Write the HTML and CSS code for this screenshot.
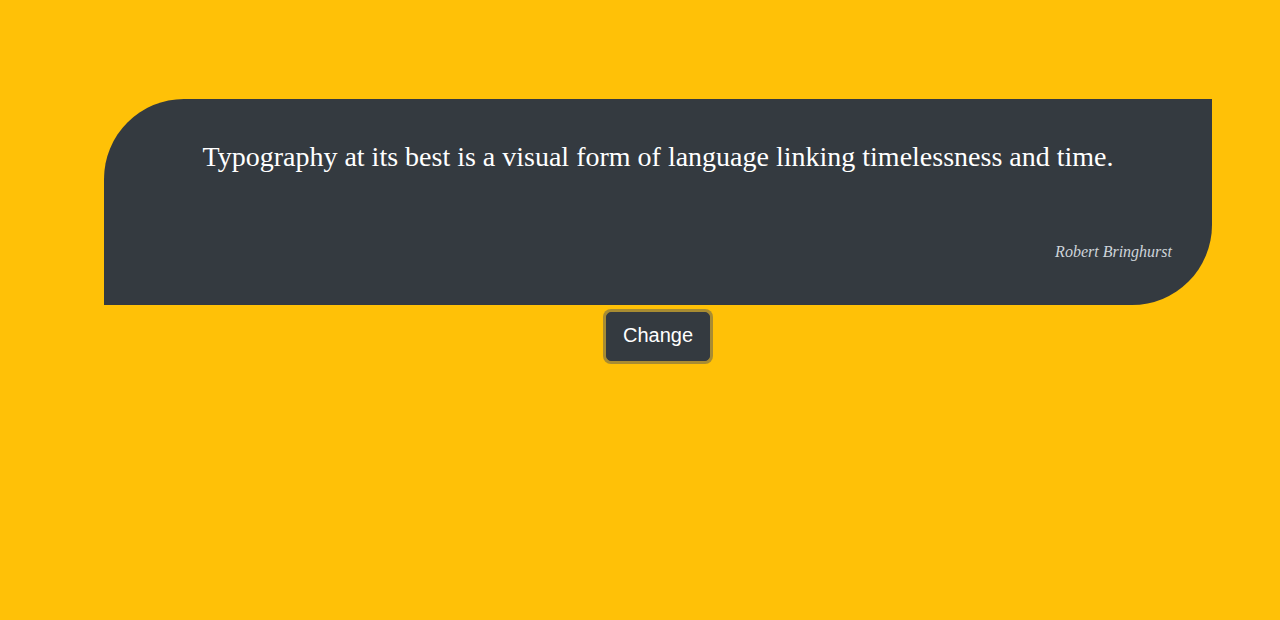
FILE: index.html
```html
<!DOCTYPE html>
<html>
<head>
<meta charset="utf-8">
<link rel="stylesheet" href="styles.css">
</head>
<body>
<main class="page">
  <section class="card">
    <blockquote class="quote">
      <p class="quote-text">Typography at its best is a visual form of language linking timelessness and time.</p>
      <footer class="quote-author">Robert Bringhurst</footer>
    </blockquote>
  </section>
  <div class="actions">
    <button class="btn" type="button">Change</button>
  </div>
</main>
</body>
</html>
```
FILE: styles.css
```css
html, body {
  margin: 0;
  padding: 0;
  background: #ffc107;
  height: 100%;
}
.page {
  padding-top: 99px;
}
.card {
  margin-left: 104px;
  width: 1108px;
  height: 206px;
  box-sizing: border-box;
  background: #343a40;
  border-top-left-radius: 80px;
  border-bottom-right-radius: 80px;
  padding: 38px 40px 0 40px;
}
.quote {
  margin: 0;
}
.quote-text {
  margin: 0;
  text-align: center;
  font-family: "Liberation Serif", "Times New Roman", serif;
  font-size: 28px;
  line-height: 40px;
  color: #ffffff;
}
.quote-author {
  margin-top: 63px;
  text-align: right;
  font-family: "Liberation Serif", "Times New Roman", serif;
  font-style: italic;
  font-size: 16px;
  line-height: 24px;
  color: #ced4da;
}
.actions {
  display: flex;
  justify-content: center;
  padding-left: 36px;
  padding-top: 7px;
}
.btn {
  font-family: "Liberation Sans", Arial, sans-serif;
  font-size: 20px;
  line-height: 30px;
  padding: 7px 16px 10px;
  color: #ffffff;
  background: #343a40;
  border: 1px solid #343a40;
  border-radius: 5px;
  box-shadow: 0 0 0 3px rgba(82, 88, 93, 0.5);
}
```
